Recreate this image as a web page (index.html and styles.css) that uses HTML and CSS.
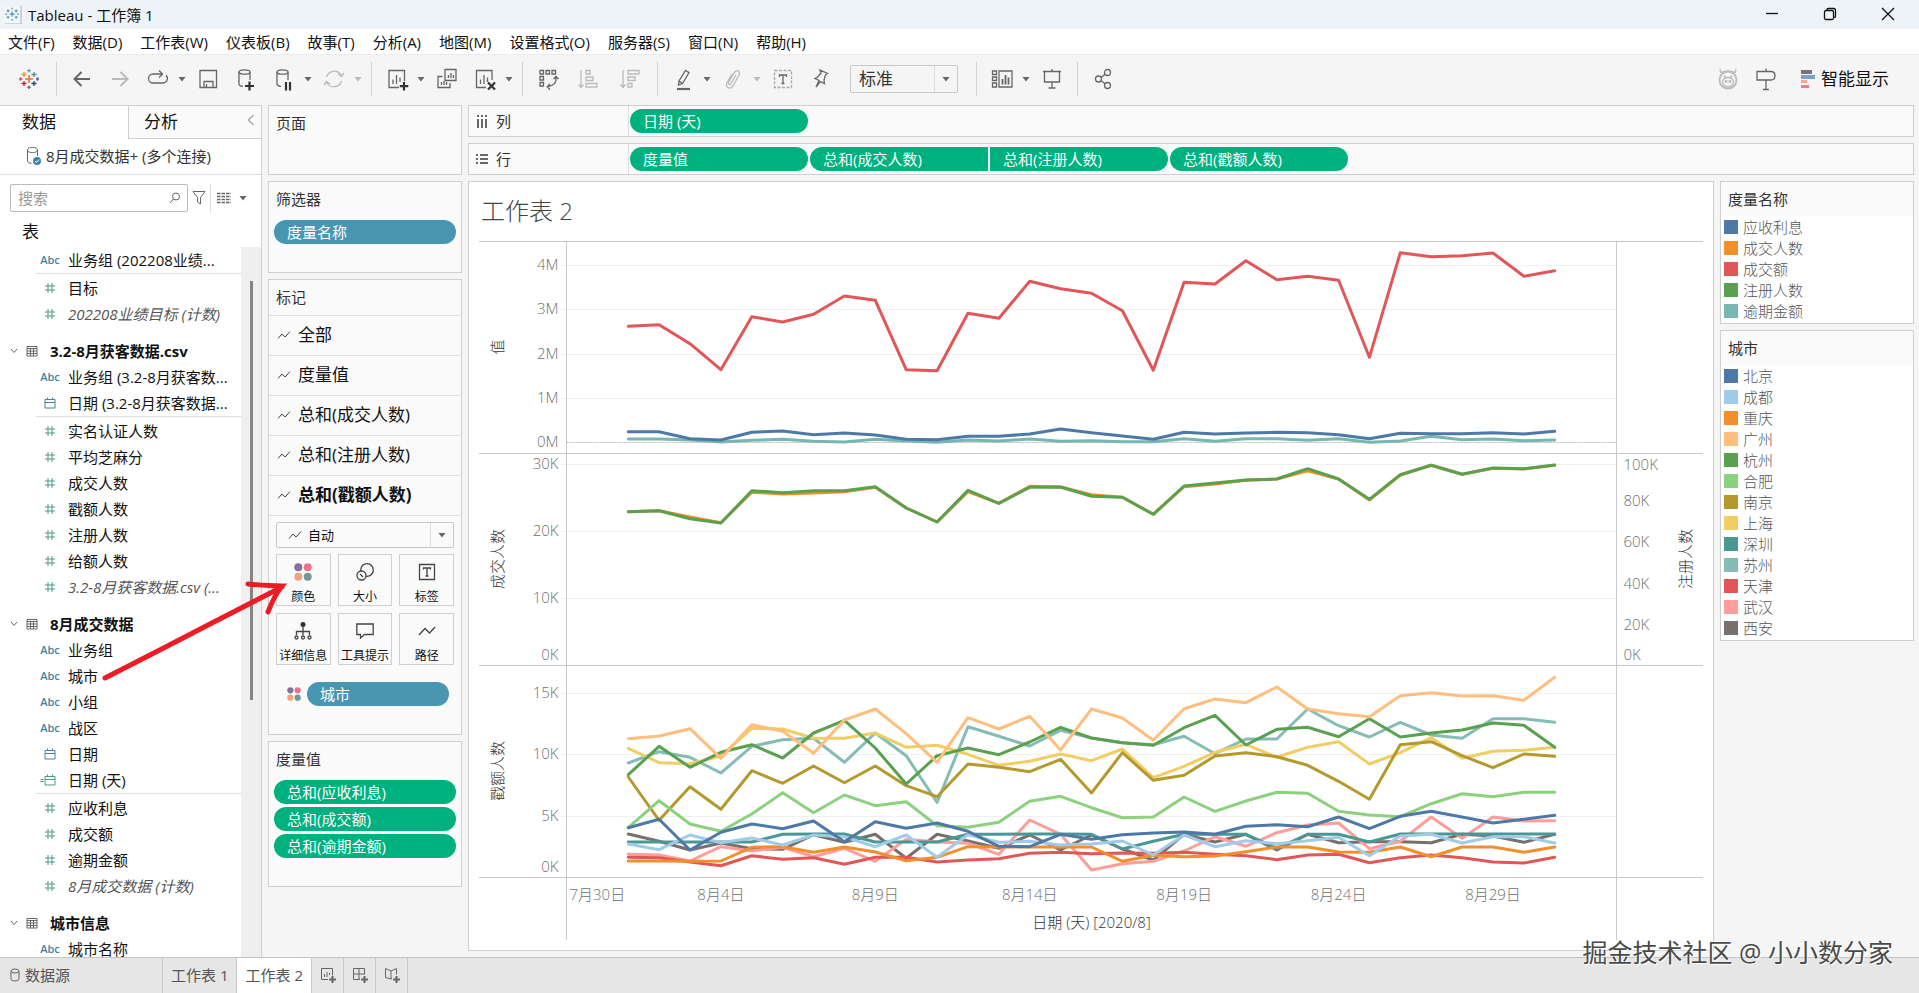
FILE: index.html
```html
<!DOCTYPE html>
<html lang="zh-CN">

<head>
    <meta charset="UTF-8">
    <meta name="viewport" content="width=device-width, initial-scale=1.0">
    <title>Tableau - 工作簿 1</title>
    <link rel="stylesheet" href="styles.css">
</head>

<body>
    <!-- shared icons -->
    <svg class="sprite" aria-hidden="true">
        <symbol id="i-hash" viewBox="0 0 12 12"><path d="M4 1v10M8 1v10M1 4h10M1 8h10" /></symbol>
        <symbol id="i-date" viewBox="0 0 12 12"><path d="M1 2.5h10v8.500H1zM1 5.500h10M3.500 0.500v2M8.500 0.500v2" /></symbol>
        <symbol id="i-calc-date" viewBox="0 0 16 12"><path d="M5 2.500h10v8.500H5zM5 5.500h10M7.500 0.500v2M12.500 0.500v2M0.500 5.500h3M0.500 7.500h3" /></symbol>
        <symbol id="i-table" viewBox="0 0 12 12"><path d="M1 1.500h10v9.500H1zM1 3.500h10M1 6h10M1 8.500h10M4.500 3.500v7.500M7.500 3.500v7.500" /></symbol>
        <symbol id="i-chev" viewBox="0 0 8 8"><path d="M1 2l3 3.500L7 2" /></symbol>
        <symbol id="i-line" viewBox="0 0 14 10"><path d="M1 8.500L5 4l3 3 5-5.500" /></symbol>
        <symbol id="i-caret" viewBox="0 0 8 6"><path d="M0.500 1h7L4 5.500z" /></symbol>
        <symbol id="i-dots" viewBox="0 0 18 18">
            <circle cx="4.300" cy="4.300" r="4" fill="#86709a" /><circle cx="13.700" cy="4.300" r="4" fill="#f0728a" />
            <circle cx="4.300" cy="13.700" r="4" fill="#f2a27c" /><circle cx="13.700" cy="13.700" r="4" fill="#73979e" />
        </symbol>
    </svg>

    <header class="titlebar">
        <svg class="app-icon" viewBox="0 0 20 20">
            <rect x="1" y="0" width="19" height="20" fill="#c9cfd4" stroke="none" /><rect width="18" height="19" fill="#f4f7f9" stroke="none" />
            <path d="M9 6v6M6 9h6M4.500 4v3M3 5.500h3M13.500 4v3M12 5.500h3M4.500 11v3M3 12.500h3M13.500 11v3M12 12.500h3M9 2v2M9 14.500v2M1.500 9h2M14.500 9h2" stroke="#4795b5" stroke-width="1.300" fill="none" />
        </svg>
        <span class="app-name">Tableau - 工作簿 1</span>
        <div class="win-buttons">
            <button aria-label="最小化"><svg viewBox="0 0 14 14"><path d="M1 6.500h12" /></svg></button>
            <button aria-label="还原"><svg viewBox="0 0 14 14"><rect x="1.500" y="3.500" width="9" height="9" rx="1.500" /><path d="M4 3V2.500Q4 1.500 5 1.500h5.500Q12.500 1.500 12.500 3.500V9.500Q12.500 10.500 11 10.500" /></svg></button>
            <button aria-label="关闭"><svg viewBox="0 0 14 14"><path d="M1 1l12 12M13 1L1 13" /></svg></button>
        </div>
    </header>

    <nav class="menubar">
        <a href="#">文件(F)</a><a href="#">数据(D)</a><a href="#">工作表(W)</a><a href="#">仪表板(B)</a><a href="#">故事(T)</a><a href="#">分析(A)</a><a href="#">地图(M)</a><a href="#">设置格式(O)</a><a href="#">服务器(S)</a><a href="#">窗口(N)</a><a href="#">帮助(H)</a>
    </nav>

    <div class="toolbar">
        <button class="tool wide" aria-label="开始">
            <svg viewBox="0 0 24 24"><path d="M12 8v8M8 12h8" stroke="#e8762c" stroke-width="1.600" /><path d="M7 5v5M4.500 7.500h5" stroke="#eb912c" /><path d="M17 5v5M14.500 7.500h5" stroke="#59879b" /><path d="M7 14v5M4.500 16.500h5" stroke="#c72035" /><path d="M17 14v5M14.500 16.500h5" stroke="#1f447e" /><path d="M12 2v3.500M10.300 3.700h3.400" stroke="#7099a6" /><path d="M12 18.500V22M10.300 20.300h3.400M20.500 10.300v3.400M19 12h3" stroke="#5b6591" /><path d="M3.500 10.300v3.400M2 12h3.500" stroke="#c74c7e" /></svg>
        </button>
        <span class="sep"></span>
        <button class="tool" aria-label="撤消"><svg viewBox="0 0 24 24"><path d="M20 12H4.500M11.500 5l-7 7 7 7" stroke-width="2" /></svg></button>
        <button class="tool dim" aria-label="重做"><svg viewBox="0 0 24 24"><path d="M4 12h15.500M12.500 5l7 7-7 7" stroke-width="2" /></svg></button>
        <button class="tool" aria-label="重播动画"><svg viewBox="0 0 24 24"><path d="M10 7H7a4.500 4.500 0 0 0 0 9h10a4.500 4.500 0 0 0 3-7.800M9.500 7H16M13 3.500L16.500 7 13 10.500" /></svg></button>
        <svg class="caret"><use href="#i-caret" /></svg>
        <button class="tool" aria-label="保存"><svg viewBox="0 0 24 24"><path d="M4 3.500h16.500v17H4zM8 20.500v-6h9v6M10.500 17v3.500" /></svg></button>
        <button class="tool" aria-label="新建数据源"><svg viewBox="0 0 24 24"><ellipse cx="10.500" cy="5" rx="5.500" ry="2.200" /><path d="M5 5v12q0 2 4 2.300M16 5v8" /><path d="M15.500 14.500v9M11 19h9" stroke="#333" stroke-width="2.200" /></svg></button>
        <button class="tool" aria-label="暂停自动更新"><svg viewBox="0 0 24 24"><ellipse cx="10.500" cy="5" rx="5.500" ry="2.200" /><path d="M5 5v12q0 2 4 2.300M16 5v8" /><path d="M14 15v8.500M18 15v8.500" stroke="#333" stroke-width="2.200" /></svg></button>
        <svg class="caret"><use href="#i-caret" /></svg>
        <button class="tool dim" aria-label="运行更新"><svg viewBox="0 0 24 24"><path d="M4.500 10A8 8 0 0 1 19 8M19.500 14A8 8 0 0 1 5 16M22 6l-2.500 3.500L16 7M2 18l2.500-3.500L8 17" /></svg></button>
        <svg class="caret dim"><use href="#i-caret" /></svg>
        <span class="sep"></span>
        <button class="tool" aria-label="新建工作表"><svg viewBox="0 0 24 24"><path d="M14 20.500H4v-17h15.500V14M8 12.500V17M11.500 8v9M15 10.500V15" /><path d="M19 15v8.500M14.800 19.200h8.500" stroke="#333" stroke-width="2.200" /></svg></button>
        <svg class="caret"><use href="#i-caret" /></svg>
        <button class="tool" aria-label="复制"><svg viewBox="0 0 24 24"><path d="M10 2.500h11v11H10zM7.500 9.500H3v11h12v-4.500M13.500 8v3M16 6v5M18.500 8v3M6.500 15v3M9 14v4M11.500 15v3" /></svg></button>
        <button class="tool" aria-label="清除工作表"><svg viewBox="0 0 24 24"><path d="M13 20.500H3.500v-17H19V13M7.500 12.500V17M11 8v9M14.500 10.500V15" /><path d="M15 15.500l7 7M22 15.500l-7 7" stroke="#333" stroke-width="2.200" /></svg></button>
        <svg class="caret"><use href="#i-caret" /></svg>
        <span class="sep"></span>
        <button class="tool" aria-label="交换行和列"><svg viewBox="0 0 24 24"><path d="M4 3.500h3.500V7H4zM10 3.500h3.500V7H10zM16 3.500h3.500V7H16zM4 9.500h3.500V13H4zM4 15.500h3.500V19H4zM20 10q1 8.500-8.500 9.500M17.500 12L20 9.500l2.500 2.500M14 17l-2.800 2.700L14 22.500" /></svg></button>
        <button class="tool wide dim" aria-label="升序排序"><svg viewBox="0 0 24 24"><path d="M5 3v17M2.500 17.500L5 20.500l2.500-3M10 3.500h4V7h-4zM10 10h7v3.500h-7zM10 16.500h11V20H10z" /></svg></button>
        <button class="tool wide dim" aria-label="降序排序"><svg viewBox="0 0 24 24"><path d="M5 3v17M2.500 17.500L5 20.500l2.500-3M10 3.500h11V7H10zM10 10h7v3.500h-7zM10 16.500h4V20h-4z" /></svg></button>
        <span class="sep"></span>
        <button class="tool" aria-label="突出显示"><svg viewBox="0 0 24 24"><path d="M14.500 3.500l3.500 2-6.500 11-4 1.500 0.500-4zM8 14l3.500 2.500" /><path d="M6 22h13" stroke-width="2.200" /></svg></button>
        <svg class="caret"><use href="#i-caret" /></svg>
        <button class="tool dim" aria-label="组成员"><svg viewBox="0 0 24 24"><path d="M15 8l-5 8.500q-1 1.500-2 0.800t-0.200-2.300l5.500-9.500q2-2.800 4-1.500t0.700 4L12 19q-2.500 3.300-5 1.500t-1-5L11 7" /></svg></button>
        <svg class="caret dim"><use href="#i-caret" /></svg>
        <button class="tool" aria-label="显示标记标签"><svg viewBox="0 0 24 24"><rect x="3.500" y="3.500" width="17" height="17" stroke="#aaa" stroke-dasharray="3 1.500" /><path d="M8.500 10V8h7v2M12 8v8.500M10.500 16.500h3" /></svg></button>
        <button class="tool" aria-label="固定轴"><svg viewBox="0 0 24 24"><path d="M11 3l7.500 3.500-2 1.500-1.500 5 0.500 3.500-4-2L7 20l3-6.500-4-2 2.500-1.500 3.500-4z" /></svg></button>
        <div class="fit">
            <select aria-label="适合"><option>标准</option></select>
            <svg class="caret"><use href="#i-caret" /></svg>
        </div>
        <span class="sep"></span>
        <button class="tool" aria-label="显示/隐藏卡"><svg viewBox="0 0 24 24"><path d="M2.500 4h4v3.500h-4zM2.500 10h4v3.500h-4zM2.500 16h4v4h-4zM9 4h13v16H9z" /><path d="M12.500 12v5.500M15.500 8v9.500M18.500 10.500v7" stroke-width="1.800" /></svg></button>
        <svg class="caret"><use href="#i-caret" /></svg>
        <button class="tool" aria-label="演示模式"><svg viewBox="0 0 24 24"><path d="M3 4.500h18M4.500 4.500V15h15V4.500M12 2v2.500M12 15v6M8.500 21h7" /></svg></button>
        <span class="sep"></span>
        <button class="tool" aria-label="共享"><svg viewBox="0 0 24 24"><circle cx="7.500" cy="12" r="3" /><circle cx="16.500" cy="5.500" r="3" /><circle cx="16.500" cy="18.500" r="3" /><path d="M10 10.500l4-3.300M10 13.500l4 3.300" /></svg></button>

        <div class="toolbar-right">
            <button class="tool dim" aria-label="数据指南"><svg viewBox="0 0 24 24"><path d="M4 2l1 4M20 2l-1 4M5 5.500q7-3 14 0" /><circle cx="12" cy="13" r="8.500" stroke-width="1.800" /><ellipse cx="12" cy="15" rx="5.500" ry="4.500" /><circle cx="10" cy="14.500" r="0.800" /><circle cx="14" cy="14.500" r="0.800" /><path d="M7.500 9.500h2.500M14 9.500h2.500" /></svg></button>
            <button class="tool" aria-label="导览"><svg viewBox="0 0 24 24"><path d="M3 4.500h14q4 0 4 4.200t-4 4.300H3zM12 1.500v3M12 13v9.500M9 22.500h6" /></svg></button>
            <button class="show-me">
                <svg viewBox="0 0 14 20"><path d="M0 1h11v4H0z" fill="#7c7183" /><path d="M0 6h14v4H0z" fill="#7c9fc9" /><path d="M0 11h6v3H0z" fill="#f4a98d" /><path d="M0 16h8v3H0z" fill="#ee7c8b" /></svg>
                智能显示
            </button>
        </div>
    </div>

    <main class="workspace">
        <aside class="data-pane">
            <div class="side-tabs">
                <button class="side-tab active">数据</button>
                <button class="side-tab">分析
                    <svg class="collapse" viewBox="0 0 8 12"><path d="M6.500 1L1.500 6l5 5" /></svg>
                </button>
            </div>
            <div class="source">
                <svg viewBox="0 0 16 20"><ellipse cx="6.500" cy="4" rx="5" ry="2.500" /><path d="M1.500 4v11q0 2 4 2.500M11.500 4v6" /><circle cx="11" cy="15" r="4" fill="#3c84a6" stroke="none" /><path d="M9 15l1.500 1.500 2.500-3" stroke="#fff" /></svg>
                8月成交数据+ (多个连接)
            </div>
            <div class="search-row">
                <div class="search">
                    <input type="text" placeholder="搜索" aria-label="搜索">
                    <svg viewBox="0 0 12 12"><circle cx="7" cy="4.500" r="3.500" /><path d="M4.500 7L1 11" /></svg>
                </div>
                <button aria-label="筛选"><svg width="14" height="16" viewBox="0 0 14 16"><path d="M1 1.500h12L8.500 7.500V14l-3-2V7.500z" /></svg></button>
                <button class="view-as" aria-label="查看方式">
                    <svg width="14" height="12" viewBox="0 0 14 12"><path d="M0 1.500h14M0 4.500h14M0 7.500h14M0 10.500h14" stroke-dasharray="3.500 1" stroke-width="1.500" /></svg>
                    <svg class="caret"><use href="#i-caret" /></svg>
                </button>
            </div>
            <h2>表</h2>
            <div class="fields">
                <ul id="fieldList"></ul>
                <div class="scrollbar"><span></span></div>
            </div>
        </aside>

        <section class="cards">
            <div class="card pages"><h3>页面</h3></div>
            <div class="card filters">
                <h3>筛选器</h3>
                <span class="pill blue">度量名称</span>
            </div>
            <div class="card marks">
                <h3>标记</h3>
                <button class="mark-row"><svg><use href="#i-line" /></svg>全部</button>
                <button class="mark-row"><svg><use href="#i-line" /></svg>度量值</button>
                <button class="mark-row"><svg><use href="#i-line" /></svg>总和(成交人数)</button>
                <button class="mark-row"><svg><use href="#i-line" /></svg>总和(注册人数)</button>
                <button class="mark-row current"><svg><use href="#i-line" /></svg>总和(戳额人数)</button>
                <div class="mark-type">
                    <svg class="mark-icon"><use href="#i-line" /></svg>
                    <select aria-label="标记类型"><option>自动</option></select>
                    <svg class="caret"><use href="#i-caret" /></svg>
                </div>
                <div class="mark-grid">
                    <button><svg><use href="#i-dots" /></svg>颜色</button>
                    <button><svg viewBox="0 0 18 18"><circle cx="11" cy="7" r="6.300" /><circle cx="5.500" cy="12.500" r="4.500" fill="#fafafa" /><path d="M4 11l3 3" /></svg>大小</button>
                    <button><svg viewBox="0 0 18 18"><path d="M1.500 1.500h15v15h-15zM5.500 6.500V5h7v1.500M9 5v8M7.500 13h3" /></svg>标签</button>
                    <button><svg viewBox="0 0 18 18"><circle cx="9" cy="2.500" r="2.500" fill="#333" stroke="none" /><path d="M9 4v9M2.500 13V9.500h13V13" /><circle cx="2.500" cy="15.500" r="1.500" /><circle cx="9" cy="15.500" r="1.500" /><circle cx="15.500" cy="15.500" r="1.500" /></svg>详细信息</button>
                    <button><svg viewBox="0 0 18 18"><path d="M0.800 2h16.400v10.500H8.500L4.500 16v-3.500H0.800z" /></svg>工具提示</button>
                    <button><svg viewBox="0 0 18 18"><path d="M1 13l6-6.500 4.500 4.500L17 5" /></svg>路径</button>
                </div>
                <div class="encoding">
                    <svg><use href="#i-dots" /></svg>
                    <span class="pill blue">城市</span>
                </div>
            </div>
            <div class="card measures">
                <h3>度量值</h3>
                <span class="pill">总和(应收利息)</span>
                <span class="pill">总和(成交额)</span>
                <span class="pill">总和(逾期金额)</span>
            </div>
        </section>

        <section class="canvas">
            <div class="shelf">
                <div class="shelf-name"><svg viewBox="0 0 12 14"><path d="M2 1v2M6 1v2M10 1v2M2 5v9M6 5v9M10 5v9" /></svg>列</div>
                <div class="shelf-pills"><span class="pill">日期 (天)</span></div>
            </div>
            <div class="shelf">
                <div class="shelf-name"><svg viewBox="0 0 12 14"><path d="M0 3h2M4 3h8M0 7h2M4 7h8M0 11h2M4 11h8" /></svg>行</div>
                <div class="shelf-pills">
                    <span class="pill">度量值</span>
                    <span class="pill dual-left">总和(成交人数)</span>
                    <span class="pill dual-right">总和(注册人数)</span>
                    <span class="pill">总和(戳额人数)</span>
                </div>
            </div>
            <div class="view-row">
                <div class="view">
                    <h1>工作表 2</h1>
                    <div class="chart" id="chart"></div>
                </div>
                <div class="legends">
                    <div class="legend"><h3>度量名称</h3><ul id="measureLegend"></ul></div>
                    <div class="legend"><h3>城市</h3><ul id="cityLegend"></ul></div>
                </div>
            </div>
        </section>
    </main>

    <footer class="sheet-tabs">
        <button class="source-tab"><svg viewBox="0 0 10 14"><ellipse cx="5" cy="3" rx="4" ry="2" /><path d="M1 3v8q0 2 4 2t4-2V3" /></svg>数据源</button>
        <button>工作表 1</button>
        <button class="active">工作表 2</button>
        <button class="new-tab" aria-label="新建工作表"><svg viewBox="0 0 18 16"><path d="M8 12.500H1.500V1.500h11v7M4.500 7v3M7 5v5M9.500 6v2" /><path d="M12.500 9v7M9 12.500h7" stroke-width="2" /></svg></button>
        <button class="new-tab" aria-label="新建仪表板"><svg viewBox="0 0 18 16"><path d="M8 12.500H1.500V1.500h11v6M1.500 7h11M7 1.500v11" /><path d="M12.500 9v7M9 12.500h7" stroke-width="2" /></svg></button>
        <button class="new-tab" aria-label="新建故事"><svg viewBox="0 0 18 16"><path d="M7 4v8L1.500 10.500v-9L7 4l5.500-2.500v6M7 12l1-0.500" /><path d="M12.500 9v7M9 12.500h7" stroke-width="2" /></svg></button>
    </footer>

    <svg class="arrow" viewBox="0 0 190 110" aria-hidden="true">
        <path d="M5 104Q60 76 110 50L182 13M148 10q20 2 34 2Q174 22 168 38" />
    </svg>
    <div class="watermark">掘金技术社区 @ 小小数分家</div>

    <script src="script.js"></script>
</body>

</html>
```
FILE: styles.css
```css
:root {
    --line: #cfcfcf;
    --panel: #fafafa;
    --green: #00b180;
    --blue: #4996b2;
    --icon: #666;
}

* {
    box-sizing: border-box;
}

body {
    margin: 0;
    height: 100vh;
    display: flex;
    flex-direction: column;
    overflow: hidden;
    position: relative;
    background: #f5f5f5;
    color: #111;
    font-family: "Open Sans", "Noto Sans CJK SC", sans-serif;
    font-size: 15px;
    line-height: 20px;
}

h1,
h2,
h3,
ul {
    margin: 0;
    padding: 0;
    font-weight: 400;
    list-style: none;
}

button,
select,
input {
    font: inherit;
    color: inherit;
    background: none;
    border: 0;
    padding: 0;
    margin: 0;
}

svg {
    fill: none;
    stroke: var(--icon);
    flex: none;
}

.sprite {
    position: absolute;
    width: 0;
    height: 0;
}

.caret {
    width: 8px;
    height: 6px;
    fill: var(--icon);
    stroke: none;
}

/* window chrome */
.titlebar {
    display: flex;
    align-items: center;
    height: 29px;
    padding: 0 2px 0 4px;
    background: #edf3f7;
}

.app-icon {
    width: 18px;
    height: 20px;
}

.app-name {
    margin-left: 6px;
}

.win-buttons {
    margin-left: auto;
    display: flex;
}

.win-buttons button {
    width: 58px;
    height: 28px;
}

.win-buttons svg {
    width: 14px;
    height: 14px;
    stroke: #111;
    stroke-width: 1.3;
}

.menubar {
    display: flex;
    align-items: center;
    gap: 18px;
    height: 26px;
    padding-left: 8px;
    background: #fff;
    border-bottom: 1px solid #ebebeb;
}

.menubar a {
    color: #111;
    text-decoration: none;
    white-space: nowrap;
}

/* toolbar */
.toolbar {
    display: flex;
    align-items: center;
    height: 50px;
    padding: 0 30px 2px 8px;
}

.tool {
    width: 24px;
    height: 24px;
    margin: 0 7px;
    display: flex;
    justify-content: center;
}

.tool.wide {
    width: 28px;
}

.tool svg {
    width: 24px;
    height: 24px;
    stroke-width: 1.3;
}

.toolbar .dim {
    opacity: 0.4;
}

.toolbar > .caret {
    margin: 0 3px 0 1px;
}

.sep {
    width: 1px;
    height: 34px;
    margin: 0 6px;
    background: #d4d4d4;
}

.fit {
    display: flex;
    align-items: center;
    width: 108px;
    height: 28px;
    margin: 0 12px 0 10px;
    border: 1px solid #c8c8c8;
    border-radius: 2px;
    font-size: 17px;
}

select {
    flex: 1;
    min-width: 0;
    height: 100%;
    appearance: none;
    border-right: 1px solid #ddd;
}

.fit select {
    padding-left: 8px;
    color: #333;
}

.fit .caret,
.mark-type .caret {
    margin: 0 7px;
}

.toolbar-right {
    margin-left: auto;
    display: flex;
    align-items: center;
}

.show-me {
    display: flex;
    align-items: center;
    gap: 6px;
    margin-left: 16px;
    font-size: 17px;
}

.show-me svg {
    width: 14px;
    height: 20px;
    stroke: none;
}

/* main area */
.workspace {
    flex: 1;
    min-height: 0;
    display: flex;
    gap: 6px;
    padding-right: 5px;
}

.data-pane {
    width: 262px;
    flex: none;
    display: flex;
    flex-direction: column;
    background: #fff;
    border-right: 1px solid var(--line);
}

.side-tabs {
    display: flex;
    border-top: 1px solid var(--line);
    font-size: 17px;
}

.side-tab {
    position: relative;
    flex: 1;
    height: 33px;
    padding-left: 15px;
    text-align: left;
    background: var(--panel);
    border-left: 1px solid var(--line);
    border-bottom: 1px solid var(--line);
}

.side-tab.active {
    flex: none;
    width: 128px;
    padding-left: 21px;
    background: #fff;
    border-color: transparent;
}

.collapse {
    position: absolute;
    right: 6px;
    top: 8px;
    width: 8px;
    height: 12px;
}

.source {
    display: flex;
    align-items: center;
    gap: 4px;
    height: 36px;
    padding: 0 0 2px 26px;
    color: #333;
    border-bottom: 1px solid #ddd;
}

.source svg {
    width: 16px;
    height: 20px;
}

.search-row {
    display: flex;
    align-items: center;
    gap: 4px;
    padding: 9px 0 0 10px;
}

.search-row button {
    display: flex;
    align-items: center;
}

.search {
    display: flex;
    align-items: center;
    width: 178px;
    height: 28px;
    padding: 0 6px 0 7px;
    border: 1px solid #bbb;
    border-radius: 2px;
}

.search input {
    flex: 1;
    min-width: 0;
}

.search input::placeholder {
    color: #999;
}

.search svg {
    width: 12px;
    height: 12px;
}

.search-row .view-as {
    gap: 8px;
    height: 28px;
    padding-left: 6px;
    border-left: 1px solid #ddd;
}

.data-pane h2 {
    padding: 10px 0 5px 22px;
    font-size: 17px;
}

.fields {
    flex: 1;
    min-height: 0;
    display: flex;
    overflow: hidden;
}

.fields ul {
    flex: 1;
    min-width: 0;
}

.fields li {
    display: flex;
    align-items: center;
    height: 26px;
    padding-left: 38px;
    white-space: nowrap;
}

.fields .icon {
    flex: none;
    width: 24px;
    margin-right: 6px;
    display: flex;
    justify-content: center;
    font-size: 11px;
    font-weight: 600;
    color: #4584a0;
}

.fields .icon svg {
    width: 12px;
    height: 12px;
    stroke: #4a9a86;
}

.fields .icon .calc {
    width: 16px;
    margin-right: 4px;
}

.fields .icon .dimension {
    stroke: #4584a0;
}

.fields .count .name {
    font-style: italic;
    color: #555;
}

.fields .rule {
    height: 1px;
    margin: 0 0 1px 36px;
    padding: 0;
    background: #ddd;
}

.fields .table {
    margin-top: 11px;
    padding-left: 10px;
    font-weight: 700;
}

.fields .table svg {
    width: 12px;
    height: 12px;
}

.fields .table svg:first-child {
    width: 8px;
    height: 8px;
    margin-right: 8px;
}

.fields .table .name {
    margin-left: 12px;
}

.scrollbar {
    width: 20px;
    padding: 34px 0 0 9px;
    background: #efefef;
}

.scrollbar span {
    display: block;
    width: 3px;
    height: 419px;
    background: #858585;
}

/* cards */
.cards {
    width: 194px;
    flex: none;
    display: flex;
    flex-direction: column;
    gap: 6px;
}

.card {
    border: 1px solid var(--line);
    background: var(--panel);
}

.card h3,
.legend h3 {
    padding: 8px 7px 9px;
    color: #333;
    font-size: 15px;
    line-height: 18px;
}

.pages {
    height: 70px;
}

.filters {
    height: 92px;
    padding: 0 5px;
}

.filters h3,
.measures h3 {
    padding: 8px 2px 12px;
}

.pill {
    display: block;
    height: 24px;
    padding: 0 13px;
    border-radius: 12px;
    background: var(--green);
    color: #fff;
    line-height: 24px;
    white-space: nowrap;
}

.pill.blue {
    background: var(--blue);
}

.marks {
    height: 456px;
}

.mark-row {
    display: flex;
    align-items: center;
    gap: 7px;
    width: 100%;
    height: 40px;
    padding: 0 0 2px 8px;
    border-top: 1px solid #ddd;
    font-size: 17px;
}

.mark-row svg,
.mark-icon {
    width: 14px;
    height: 10px;
    stroke: #444;
}

.mark-row.current {
    height: 41px;
    font-weight: 700;
    border-bottom: 1px solid #ddd;
}

.mark-type {
    display: flex;
    align-items: center;
    height: 26px;
    margin: 6px 7px;
    padding-left: 11px;
    border: 1px solid #c8c8c8;
    border-radius: 2px;
    font-size: 13px;
}

.mark-type select {
    padding-left: 6px;
}

.mark-grid {
    display: grid;
    grid-template-columns: repeat(3, 1fr);
    gap: 7px;
    padding: 0 7px;
}

.mark-grid button {
    display: flex;
    flex-direction: column;
    align-items: center;
    gap: 8px;
    height: 52px;
    padding-top: 8px;
    border: 1px solid var(--line);
    font-size: 12px;
    line-height: 16px;
    white-space: nowrap;
}

.mark-grid svg {
    width: 18px;
    height: 18px;
    stroke: #444;
    stroke-width: 1.3;
}

.mark-grid use {
    stroke: none;
}

.encoding {
    display: flex;
    align-items: center;
    gap: 6px;
    padding: 17px 12px 0 18px;
}

.encoding svg {
    width: 14px;
    height: 14px;
    stroke: none;
}

.encoding .pill {
    flex: 1;
}

.measures {
    height: 146px;
    padding: 0 5px;
}

.measures .pill {
    margin-bottom: 3px;
}

/* shelves */
.canvas {
    flex: 1;
    min-width: 0;
    display: flex;
    flex-direction: column;
    gap: 6px;
    padding-bottom: 6px;
}

.shelf {
    display: flex;
    height: 32px;
    border: 1px solid var(--line);
    background: var(--panel);
}

.shelf-name {
    display: flex;
    align-items: center;
    gap: 8px;
    width: 160px;
    padding-left: 7px;
    color: #333;
    border-right: 1px solid #ddd;
}

.shelf-name svg {
    width: 12px;
    height: 14px;
    stroke-width: 2;
}

.shelf-pills {
    display: flex;
    align-items: center;
    gap: 2px;
    padding-left: 1px;
}

.shelf-pills .pill {
    width: 178px;
}

.shelf-pills .dual-left {
    border-radius: 12px 0 0 12px;
}

.shelf-pills .dual-right {
    border-radius: 0 12px 12px 0;
}

/* view */
.view-row {
    flex: 1;
    min-height: 0;
    display: flex;
    align-items: flex-start;
    gap: 6px;
}

.view {
    flex: 1;
    min-width: 0;
    align-self: stretch;
    display: flex;
    flex-direction: column;
    padding: 0 10px 10px;
    background: #fff;
    border: 1px solid var(--line);
}

.view h1 {
    padding: 13px 2px 14px;
    font-size: 24px;
    font-weight: 300;
    line-height: 32px;
    color: #444;
}

.chart {
    flex: 1;
    min-height: 0;
}

.chart svg {
    display: block;
}

.chart text {
    stroke: none;
    fill: #707070;
    font-size: 15px;
    font-weight: 300;
}

.chart .axis-title {
    fill: #333;
}

.chart .grid {
    stroke: #f0f0f0;
}

.chart .zero {
    stroke: #bbb;
    stroke-dasharray: 2 1;
}

.chart .border {
    stroke: #c9c9c9;
}

.chart polyline {
    stroke-width: 3;
    stroke-linejoin: round;
    stroke-linecap: round;
}

.legends {
    width: 194px;
    display: flex;
    flex-direction: column;
    gap: 6px;
}

.legend {
    background: #fff;
    border: 1px solid var(--line);
    padding-bottom: 2px;
}

.legend h3 {
    padding: 8px 7px;
    background: var(--panel);
}

.legend li {
    display: flex;
    align-items: center;
    gap: 5px;
    height: 21px;
    padding-left: 3px;
    color: #555;
    font-weight: 300;
}

.legend i {
    width: 14px;
    height: 14px;
}

/* bottom tabs */
.sheet-tabs {
    display: flex;
    height: 36px;
    background: #e6e6e6;
    border-top: 1px solid #c4c4c4;
    color: #555;
}

.sheet-tabs button {
    display: flex;
    align-items: center;
    padding: 0 8px 2px;
    border-right: 1px solid #c9c9c9;
}

.sheet-tabs .active {
    background: #fff;
}

.sheet-tabs .source-tab {
    gap: 5px;
    width: 163px;
    padding-left: 10px;
}

.source-tab svg {
    width: 10px;
    height: 14px;
}

.sheet-tabs .new-tab {
    width: 32px;
}

.new-tab svg {
    width: 18px;
    height: 16px;
}

/* overlays */
.arrow {
    position: absolute;
    left: 100px;
    top: 574px;
    width: 190px;
    height: 110px;
    stroke: #ed1c24;
    stroke-width: 5;
    stroke-linecap: round;
    pointer-events: none;
}

.watermark {
    position: absolute;
    right: 26px;
    bottom: 24px;
    font-size: 25px;
    line-height: 34px;
    color: #4a4a4a;
    text-shadow: 0 0 2px #fff, 1px 1px 1px #fff;
    pointer-events: none;
}
```
FILE: script.js
```js
// [type, name] for every row of the data pane
const fields = [
    ['abc', '业务组 (202208业绩...'],
    ['rule'],
    ['hash', '目标'],
    ['count', '202208业绩目标 (计数)'],
    ['table', '3.2-8月获客数据.csv'],
    ['abc', '业务组 (3.2-8月获客数...'],
    ['date', '日期 (3.2-8月获客数据...'],
    ['rule'],
    ['hash', '实名认证人数'],
    ['hash', '平均芝麻分'],
    ['hash', '成交人数'],
    ['hash', '戳额人数'],
    ['hash', '注册人数'],
    ['hash', '给额人数'],
    ['count', '3.2-8月获客数据.csv (...'],
    ['table', '8月成交数据'],
    ['abc', '业务组'],
    ['abc', '城市'],
    ['abc', '小组'],
    ['abc', '战区'],
    ['date', '日期'],
    ['calc', '日期 (天)'],
    ['rule'],
    ['hash', '应收利息'],
    ['hash', '成交额'],
    ['hash', '逾期金额'],
    ['count', '8月成交数据 (计数)'],
    ['table', '城市信息'],
    ['abc', '城市名称']
];

const icons = {
    abc: 'Abc',
    hash: '<svg><use href="#i-hash"/></svg>',
    count: '<svg><use href="#i-hash"/></svg>',
    date: '<svg class="dimension"><use href="#i-date"/></svg>',
    calc: '<svg class="calc"><use href="#i-calc-date"/></svg>'
};

document.getElementById('fieldList').innerHTML = fields.map(([type, name]) => {
    if (type === 'rule') return '<li class="rule"></li>';
    if (type === 'table') {
        return `<li class="table"><svg><use href="#i-chev"/></svg><svg><use href="#i-table"/></svg><span class="name">${name}</span></li>`;
    }
    return `<li class="${type}"><span class="icon">${icons[type]}</span><span class="name">${name}</span></li>`;
}).join('');

const measures = [
    ['应收利息', '#4e79a7'], ['成交人数', '#f28e2b'], ['成交额', '#e15759'],
    ['注册人数', '#59a14f'], ['逾期金额', '#76b7b2']
];

const cities = [
    ['北京', '#4e79a7', [563, 538, 630, 577, 552, 566, 543, 605, 545, 565, 549, 574, 619, 620, 583, 598, 584, 579, 576, 583, 559, 554, 560, 531, 566, 529, 514, 531, 549, 538, 526]],
    ['成都', '#a0cbe8', [612, 629, 585, 608, 594, 615, 585, 590, 620, 585, 652, 584, 607, 604, 615, 612, 603, 645, 585, 620, 602, 611, 602, 592, 647, 588, 583, 609, 590, 590, 609]],
    ['重庆', '#f28e2b', [663, 663, 664, 663, 622, 620, 637, 621, 636, 662, 652, 620, 621, 621, 621, 621, 664, 646, 650, 648, 635, 621, 621, 636, 637, 621, 650, 621, 621, 637, 621]],
    ['广州', '#ffbe7d', [296, 288, 266, 355, 254, 274, 340, 240, 207, 281, 367, 233, 267, 229, 330, 207, 234, 301, 206, 177, 188, 141, 207, 221, 230, 167, 158, 168, 167, 181, 112]],
    ['杭州', '#59a14f', [404, 319, 382, 337, 314, 354, 279, 241, 324, 432, 347, 324, 344, 306, 262, 294, 308, 316, 263, 226, 315, 268, 262, 290, 236, 291, 279, 270, 249, 256, 322]],
    ['合肥', '#8cd17d', [563, 482, 552, 574, 522, 458, 518, 465, 497, 485, 557, 562, 547, 484, 469, 503, 533, 531, 471, 514, 483, 457, 460, 514, 525, 530, 491, 461, 470, 457, 457]],
    ['南京', '#b6992d', [411, 541, 440, 508, 392, 430, 378, 428, 378, 437, 470, 372, 382, 395, 358, 459, 338, 421, 406, 348, 338, 350, 376, 424, 478, 314, 305, 347, 383, 342, 349]],
    ['上海', '#f1ce63', [325, 368, 371, 348, 265, 267, 295, 295, 279, 322, 316, 343, 376, 364, 342, 362, 327, 413, 379, 337, 313, 352, 322, 305, 372, 338, 293, 355, 334, 331, 322]],
    ['深圳', '#499894', [606, 606, 606, 606, 606, 583, 582, 582, 606, 606, 606, 583, 583, 582, 582, 583, 627, 604, 583, 583, 583, 625, 583, 583, 606, 582, 582, 582, 582, 582, 582]],
    ['苏州', '#86bcb6', [369, 335, 352, 399, 319, 299, 295, 367, 279, 347, 487, 260, 289, 318, 271, 294, 308, 314, 289, 341, 297, 297, 207, 257, 291, 247, 285, 295, 236, 236, 247]],
    ['天津', '#e15759', [652, 653, 666, 677, 647, 658, 653, 673, 652, 652, 666, 660, 656, 640, 637, 641, 639, 640, 637, 643, 647, 659, 645, 643, 668, 653, 645, 653, 666, 669, 652]],
    ['武汉', '#ff9d9a', [643, 645, 663, 620, 633, 622, 650, 625, 664, 598, 606, 610, 643, 540, 583, 690, 671, 664, 633, 590, 619, 578, 555, 549, 626, 604, 531, 595, 531, 543, 542]],
    ['西安', '#79706e', [582, 604, 630, 609, 626, 628, 584, 607, 583, 655, 583, 603, 625, 585, 630, 585, 627, 660, 583, 606, 583, 630, 583, 608, 605, 605, 608, 583, 588, 607, 583]]
];

const legend = (items) => items.map(([name, color]) => `<li><i style="background:${color}"></i>${name}</li>`).join('');
document.getElementById('measureLegend').innerHTML = legend(measures);
document.getElementById('cityLegend').innerHTML = legend(cities);

// A pane is 636 units tall and counts down from "top".
// ticks: [label, label position, draw a grid line]
const panes = [
    {
        top: 3, title: '值', zero: 607,
        ticks: [['4M', 76, true], ['3M', 208, true], ['2M', 343, true], ['1M', 475, true], ['0M', 607, false]],
        series: [
            ['#e15759', [259, 254, 311, 389, 230, 246, 223, 168, 181, 389, 392, 220, 235, 124, 146, 160, 212, 391, 127, 132, 62, 119, 109, 121, 352, 38, 50, 47, 39, 109, 92]],
            ['#76b7b2', [597, 597, 600, 606, 601, 598, 604, 606, 598, 603, 607, 600, 603, 597, 604, 602, 605, 605, 596, 604, 596, 596, 601, 596, 607, 603, 589, 599, 597, 602, 600]],
            ['#4e79a7', [575, 575, 596, 600, 577, 573, 584, 579, 585, 598, 599, 589, 589, 582, 567, 578, 588, 598, 577, 582, 579, 577, 578, 584, 596, 580, 581, 581, 578, 582, 574]]
        ]
    },
    {
        top: 639, title: '成交人数', rightTitle: '注册人数',
        ticks: [['30K', 673, true], ['20K', 874, true], ['10K', 1075, true], ['0K', 1244, false]],
        rightTicks: [['100K', 674], ['80K', 782], ['60K', 905], ['40K', 1031], ['20K', 1154], ['0K', 1244]],
        series: [
            ['#f28e2b', [815, 812, 831, 848, 757, 762, 759, 755, 742, 804, 846, 755, 790, 739, 741, 764, 772, 823, 740, 732, 721, 717, 692, 717, 780, 705, 676, 703, 685, 687, 676]],
            ['#59a14f', [815, 812, 836, 849, 752, 758, 752, 752, 740, 804, 846, 751, 790, 742, 741, 769, 772, 823, 738, 729, 720, 717, 686, 717, 778, 704, 676, 703, 684, 686, 675]]
        ]
    },
    {
        top: 75, title: '戳额人数',
        ticks: [['15K', 160, true], ['10K', 343, true], ['5K', 529, true], ['0K', 680, false]],
        series: cities.map(([, color, data]) => [color, data]).reverse()
    }
];

// label and day offset from July 30
const dates = [['8月4日', 5], ['8月9日', 10], ['8月14日', 15], ['8月19日', 20], ['8月24日', 25], ['8月29日', 30]];

const chart = document.getElementById('chart');

function drawChart() {
    const w = chart.clientWidth;
    const h = chart.clientHeight;
    const left = 87.5;
    const right = w - 86.5;
    const paneHeight = Math.floor((h - 63) / 3);
    const step = (right - left) / 34;
    let out = '';

    const line = (cls, x1, y1, x2, y2) => `<line class="${cls}" x1="${x1}" y1="${y1}" x2="${x2}" y2="${y2}"/>`;
    const text = (str, x, y, anchor, cls = '') => `<text class="${cls}" x="${x}" y="${y}" text-anchor="${anchor}">${str}</text>`;
    const turned = (str, x, y) => `<text class="axis-title" text-anchor="middle" transform="translate(${x} ${y}) rotate(-90)">${str}</text>`;

    panes.forEach((pane, n) => {
        const start = n * paneHeight;
        const y = (v) => start + (v - pane.top) * paneHeight / 636;

        pane.ticks.forEach(([label, v, grid]) => {
            if (grid) out += line('grid', left - 6, Math.round(y(v)) + 0.5, right, Math.round(y(v)) + 0.5);
            out += text(label, left - 8, Math.round(y(v)) + 5, 'end');
        });
        if (pane.zero) out += line('zero', left, Math.round(y(pane.zero)) + 0.5, right, Math.round(y(pane.zero)) + 0.5);
        out += turned(pane.title, 24, start + paneHeight / 2);

        if (pane.rightTicks) {
            pane.rightTicks.forEach(([label, v]) => {
                out += text(label, right + 7, Math.round(y(v)) + 5, 'start');
            });
            out += turned(pane.rightTitle, w - 12, start + paneHeight / 2);
        }

        pane.series.forEach(([color, data]) => {
            const points = data.map((v, i) => `${(left + (i + 2) * step).toFixed(1)},${y(v).toFixed(1)}`).join(' ');
            out += `<polyline points="${points}" style="stroke:${color}"/>`;
        });
        out += line('border', 0, start + 0.5, w, start + 0.5);
    });

    const bottom = paneHeight * 3;
    out += line('border', 0, bottom + 0.5, w, bottom + 0.5);
    out += line('border', left, 0, left, h);
    out += line('border', right, 0, right, h);

    out += text('7月30日', left + 3, bottom + 23, 'start');
    dates.forEach(([label, day]) => {
        out += text(label, left + day * step, bottom + 23, 'middle');
    });
    out += text('日期 (天) [2020/8]', (left + right) / 2, bottom + 51, 'middle', 'axis-title');

    chart.innerHTML = `<svg width="${w}" height="${h}">${out}</svg>`;
}

drawChart();
window.addEventListener('resize', () => {
    chart.innerHTML = '';
    drawChart();
});
```
